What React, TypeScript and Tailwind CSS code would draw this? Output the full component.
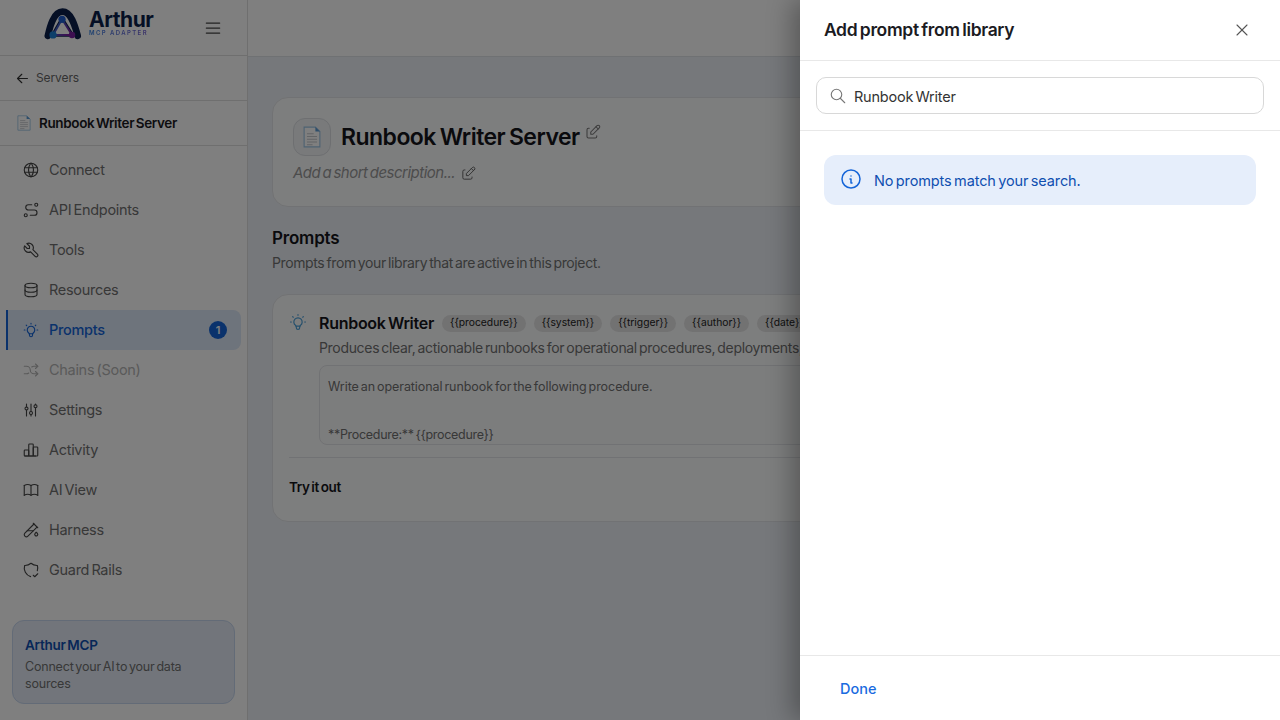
import React from 'react';
import {
  TbAdjustments,
  TbArrowLeft,
  TbArrowsShuffle,
  TbBook,
  TbBulb,
  TbChartBar,
  TbDatabase,
  TbEdit,
  TbInfoCircle,
  TbMenu2,
  TbRoute,
  TbSearch,
  TbShieldCheck,
  TbTestPipe,
  TbTool,
  TbWorld,
  TbX,
} from 'react-icons/tb';

const nav = [
  { label: 'Connect', icon: TbWorld },
  { label: 'API Endpoints', icon: TbRoute },
  { label: 'Tools', icon: TbTool },
  { label: 'Resources', icon: TbDatabase },
  { label: 'Prompts', icon: TbBulb, active: true, badge: 1 },
  { label: 'Chains (Soon)', icon: TbArrowsShuffle, disabled: true },
  { label: 'Settings', icon: TbAdjustments },
  { label: 'Activity', icon: TbChartBar },
  { label: 'AI View', icon: TbBook },
  { label: 'Harness', icon: TbTestPipe },
  { label: 'Guard Rails', icon: TbShieldCheck },
];

const vars = ['{{procedure}}', '{{system}}', '{{trigger}}', '{{author}}', '{{date}}'];

const PageIcon = ({ className }: { className: string }) => (
  <svg viewBox="0 0 16 20" preserveAspectRatio="none" className={className}>
    <path d="M1 1h10l4 4v14H1z" fill="#fff" stroke="#9cc4e4" strokeWidth="1" />
    <path d="M11 1v4h4z" fill="#5b9bd5" />
    <path d="M3.500 7h6M3.500 9.500h9M3.500 12h9M3.500 14.500h9M3.500 17h5" stroke="#c4c8cc" strokeWidth="1" />
  </svg>
);

const Logo = () => (
  <svg viewBox="0 0 40 34" className="mb-[6px] h-[33px] w-[38px] shrink-0">
    <defs>
      <linearGradient id="tri" x1="0" y1="0" x2="1" y2="0.6">
        <stop offset="0" stopColor="#1a7fd4" />
        <stop offset="1" stopColor="#7b1fa2" />
      </linearGradient>
    </defs>
    <path
      d="M4 29C6 20 10 3.500 19.500 3.500S33 20 35.500 29"
      fill="none"
      stroke="#0b1f4b"
      strokeWidth="7"
      strokeLinecap="round"
    />
    <path d="M19 11.500 9.500 28h20z" fill="#fff" stroke="#0b1f4b" strokeWidth="4" strokeLinejoin="round" />
    <path d="M19 11.500 9.500 28h20z" fill="#fff" stroke="url(#tri)" strokeWidth="2" strokeLinejoin="round" />
    <circle cx="19" cy="11.500" r="3.800" fill="#1f5fd0" />
    <circle cx="9.500" cy="28" r="3.800" fill="#1a7fd4" />
    <circle cx="29.500" cy="28" r="3.400" fill="#7b1fa2" />
  </svg>
);

export default function App() {
  return (
    <div className="relative flex h-screen overflow-hidden bg-white font-['Inter',sans-serif] text-[#1b1b1f] [word-spacing:-1.5px]">
      <aside className="flex w-[248px] shrink-0 flex-col border-r border-[#dedede] bg-white">
        <div className="flex h-[56px] items-center border-b border-[#dedede] pl-[44px] pr-[24px]">
          <Logo />
          <div className="ml-[7px] mt-[-9px] flex flex-col">
            <span className="text-[21px] font-bold leading-[19px] tracking-[-0.45px] text-[#0b1f4b]">Arthur</span>
            <span className="bg-gradient-to-r from-[#2f7fe0] to-[#7a5fd0] bg-clip-text text-[6px] font-semibold leading-[7px] tracking-[1.4px] text-transparent [word-spacing:0px]">
              MCP ADAPTER
            </span>
          </div>
          <TbMenu2 size={20} strokeWidth={1.5} className="ml-auto text-[#444]" />
        </div>
        <div className="flex h-[45px] items-center gap-[5px] border-b border-[#dedede] pl-[14px] text-[12px] tracking-[-0.1px] text-[#666]">
          <TbArrowLeft size={17} strokeWidth={1.6} className="text-[#333]" />
          Servers
        </div>
        <div className="flex h-[45px] items-center gap-[8px] border-b border-[#dedede] pl-[17px] text-[13.500px] font-semibold tracking-[-0.35px] text-[#1b1b1f]">
          <PageIcon className="h-[16px] w-[14px]" />
          Runbook Writer Server
        </div>
        <nav className="mt-[4px] flex flex-col pl-[6px] pr-[6px]">
          {nav.map((item) => {
            const Icon = item.icon;
            return (
              <div
                key={item.label}
                className={
                  item.active
                    ? 'flex h-[40px] items-center gap-[9px] rounded-r-lg border-l-2 border-[#1565d8] bg-[#dce8f8] pl-[14px] pr-[5px] text-[14.500px] font-medium tracking-[-0.3px] text-[#1565d8]'
                    : item.disabled
                      ? 'flex h-[40px] items-center gap-[9px] pl-[16px] text-[14.500px] tracking-[-0.3px] text-[#b4b4b4]'
                      : 'flex h-[40px] items-center gap-[9px] pl-[16px] text-[14.500px] tracking-[-0.3px] text-[#707070]'
                }
              >
                <Icon
                  size={18}
                  strokeWidth={1.5}
                  className={item.active ? 'text-[#1565d8]' : item.disabled ? 'text-[#b4b4b4]' : 'text-[#444]'}
                />
                {item.label}
                {item.badge && (
                  <span className="ml-auto mr-[9px] flex h-[18px] w-[18px] items-center justify-center rounded-full bg-[#1565d8] text-[11px] font-semibold text-white">
                    {item.badge}
                  </span>
                )}
              </div>
            );
          })}
        </nav>
        <div className="mx-[12px] mb-[16px] mt-auto h-[84px] rounded-xl border border-[#c6d6ee] bg-[#e4ebf6] pl-[12px] pt-[14px]">
          <div className="text-[13.500px] font-semibold leading-[20px] tracking-[-0.25px] text-[#0f4fb0]">Arthur MCP</div>
          <div className="mt-[3px] w-[180px] text-[12.500px] leading-[17px] tracking-[-0.2px] text-[#707070]">
            Connect your AI to your data sources
          </div>
        </div>
      </aside>

      <div className="flex min-w-0 flex-1 flex-col bg-[#edf1f6]">
        <div className="h-[57px] shrink-0 border-b border-[#dfe2e6] bg-white" />
        <main className="flex flex-col px-[24px] pt-[40px]">
          <section className="h-[110px] rounded-2xl border border-[#e3e5e8] bg-[#fbfcfd] pl-[20px] pt-[20px]">
            <div className="flex items-center gap-[10px]">
              <div className="flex h-[38px] w-[38px] items-center justify-center rounded-xl border border-[#dcdfe3] bg-[#f2f4f6]">
                <PageIcon className="h-[22px] w-[18px]" />
              </div>
              <h1 className="text-[23px] font-semibold tracking-[-0.53px] text-[#15151a]">Runbook Writer Server</h1>
              <TbEdit size={18} strokeWidth={1.4} className="mb-[10px] ml-[-6px] text-[#777]" />
            </div>
            <div className="mt-[6px] flex items-center gap-[5px] text-[15px] italic tracking-[-0.5px] text-[#999]">
              Add a short description...
              <TbEdit size={17} strokeWidth={1.4} className="text-[#666]" />
            </div>
          </section>

          <h2 className="mt-[19px] text-[17px] font-semibold leading-[24px] tracking-[-0.2px] text-[#15151a]">Prompts</h2>
          <p className="mt-[3px] text-[14px] leading-[20px] tracking-[-0.38px] text-[#707070]">
            Prompts from your library that are active in this project.
          </p>

          <section className="mt-[21px] h-[228px] rounded-2xl border border-[#e3e5e8] bg-[#fbfcfd] px-[16px] pt-[16px]">
            <div className="flex">
              <TbBulb size={20} strokeWidth={1.4} className="ml-[-1px] mr-[11px] mt-[1px] shrink-0 text-[#4a9fd8]" />
              <div className="min-w-0 flex-1">
                <div className="flex h-[24px] items-center whitespace-nowrap">
                  <span className="mr-[8px] text-[16px] font-semibold tracking-[-0.28px] text-[#15151a]">Runbook Writer</span>
                  {vars.map((v) => (
                    <span
                      key={v}
                      className="mr-[8px] flex h-[17px] shrink-0 items-center rounded-full bg-[#e4e4e4] px-[8px] text-[10.300px] text-[#222]"
                    >
                      {v}
                    </span>
                  ))}
                </div>
                <p className="mt-[3px] whitespace-nowrap text-[14px] leading-[20px] tracking-[-0.32px] text-[#707070]">
                  Produces clear, actionable runbooks for operational procedures, deployments, and incident response.
                </p>
                <div className="mt-[7px] h-[80px] overflow-hidden rounded-lg border border-[#e3e5e8] bg-[#f9fafb] px-[8px] pt-[13px] text-[12.500px] leading-[16px] tracking-[-0.06px] text-[#707070]">
                  <div>Write an operational runbook for the following procedure.</div>
                  <div className="mt-[32px] tracking-[-0.3px]">**Procedure:** {'{{procedure}}'}</div>
                </div>
              </div>
            </div>
            <div className="mt-[12px] border-t border-[#e3e5e8] pt-[19px] text-[13.500px] font-semibold leading-[20px] tracking-[-0.3px] text-[#15151a]">
              Try it out
            </div>
          </section>
        </main>
      </div>

      {/* Drawer overlay */}
      <div className="absolute inset-0 bg-black/50" />
      <div className="absolute inset-y-0 right-0 flex w-[480px] flex-col bg-white shadow-[-8px_0_24px_rgba(0,0,0,0.3)]">
        <div className="flex h-[61px] shrink-0 items-center justify-between border-b border-[#e8e8e8] pl-[24px] pr-[28px]">
          <span className="text-[17.500px] font-semibold tracking-[-0.35px] text-[#1b1b1f]">Add prompt from library</span>
          <TbX size={20} strokeWidth={1.3} className="text-[#555]" />
        </div>
        <div className="h-[70px] shrink-0 border-b border-[#e8e8e8] px-[16px] pt-[16px]">
          <div className="flex h-[37px] items-center rounded-[10px] border border-[#d8d8d8] pl-[12px] text-[14.500px] tracking-[-0.22px] text-[#333]">
            <TbSearch size={18} strokeWidth={1.5} className="mr-[7px] text-[#777]" />
            <span className="pt-[2px]">Runbook Writer</span>
          </div>
        </div>
        <div className="flex-1 px-[24px] pt-[24px]">
          <div className="flex h-[50px] items-center rounded-xl bg-[#e6eefb] pl-[15px] text-[14.500px] tracking-[-0.12px] text-[#0f4fb0]">
            <TbInfoCircle size={24} strokeWidth={1.5} className="mb-[2px] mr-[11px] text-[#1565d8]" />
            <span className="pt-[1px]">No prompts match your search.</span>
          </div>
        </div>
        <div className="flex h-[65px] shrink-0 items-center border-t border-[#e8e8e8] pl-[40px] pt-[1px] text-[14.500px] font-medium text-[#1a6be0]">
          Done
        </div>
      </div>
    </div>
  );
}
